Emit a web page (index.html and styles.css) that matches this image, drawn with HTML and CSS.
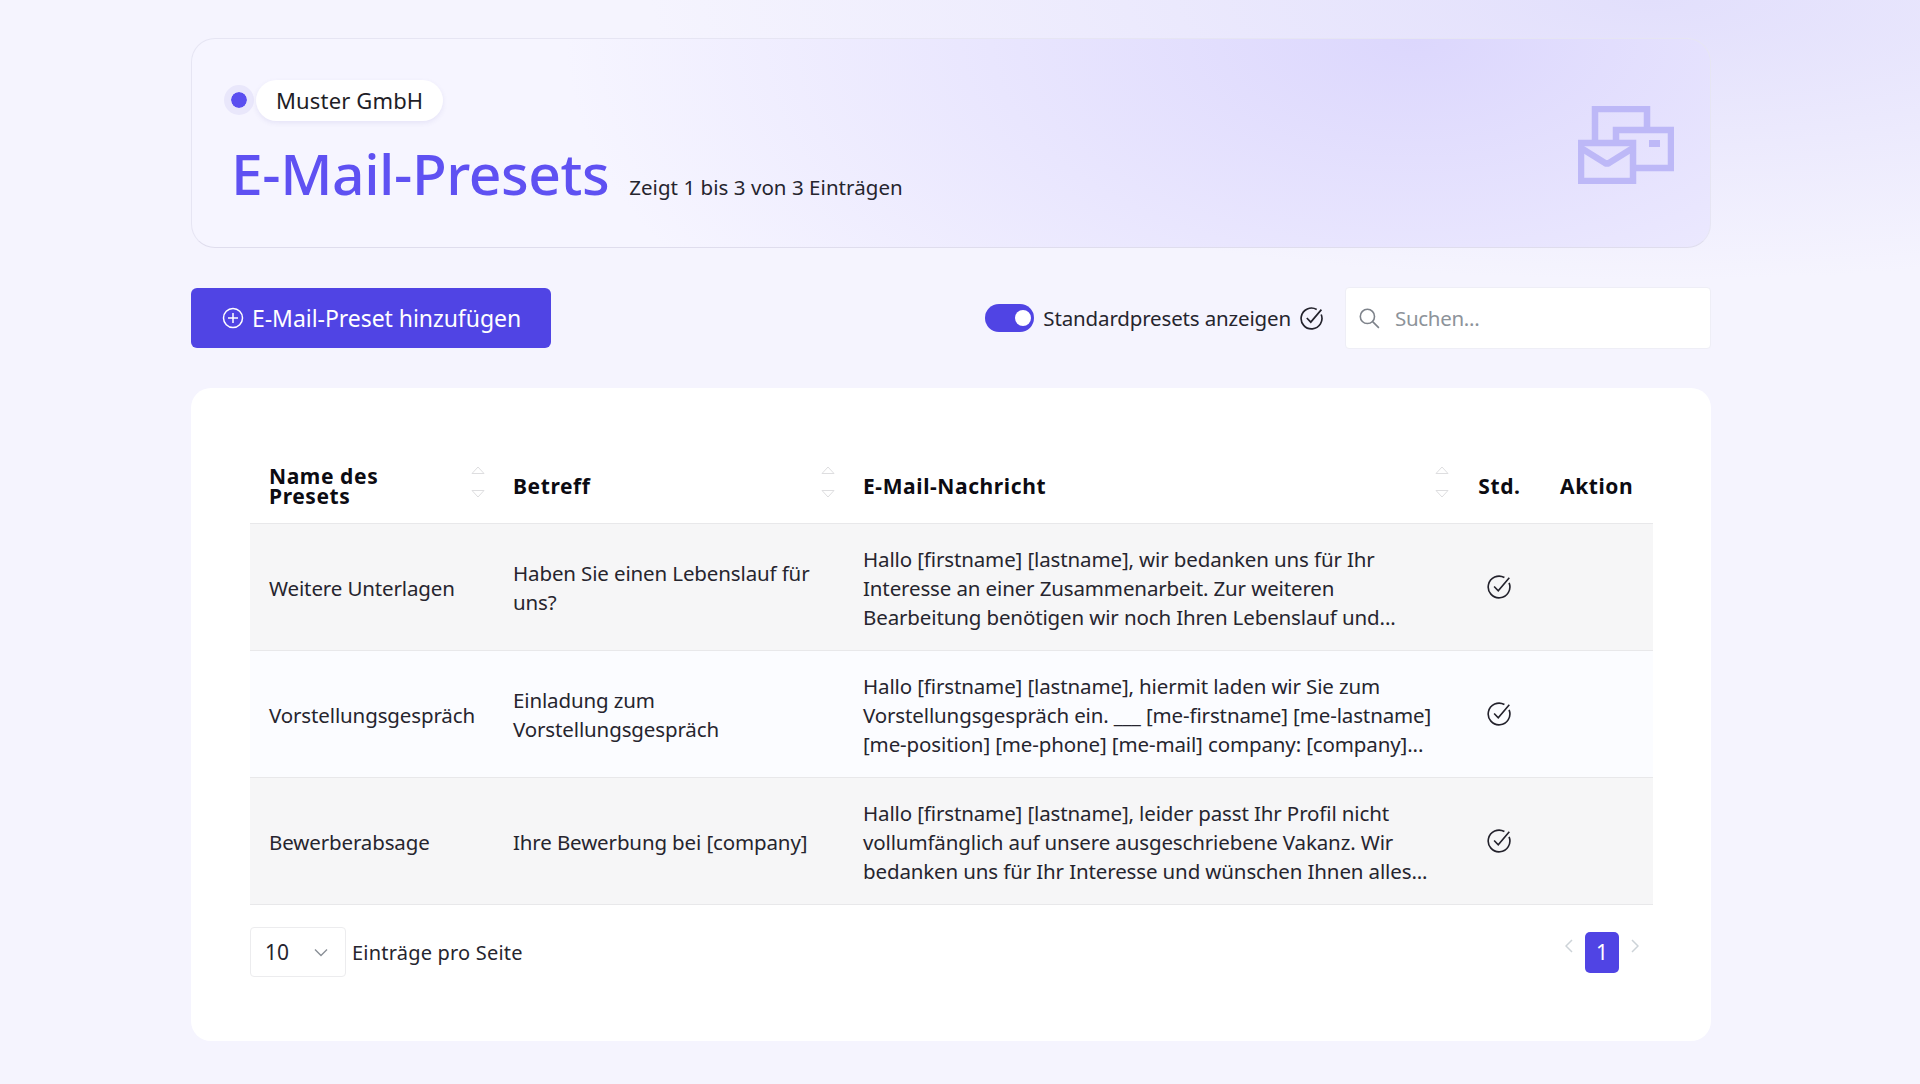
FILE: index.html
```html
<!DOCTYPE html>
<html lang="de">

<head>
    <meta charset="UTF-8" />
    <title>E-Mail-Presets</title>
    <link rel="stylesheet" href="styles.css">
</head>

<body>
    <div class="page">
        <header class="hero">
            <div class="hero-text">
                <div class="company">
                    <span class="company-dot"></span>
                    <span class="company-pill">Muster GmbH</span>
                </div>
                <div class="title-row">
                    <h1>E-Mail-Presets</h1>
                    <span class="count">Zeigt 1 bis 3 von 3 Einträgen</span>
                </div>
            </div>
            <svg class="hero-icon" width="96" height="78" viewBox="0 0 96 78" fill="none" stroke="#bdb8f7" stroke-width="6.5">
                <path d="M17 34V3H69V21" />
                <path d="M38 34V24H93V62H58" />
                <rect x="3" y="37" width="52" height="38" />
                <path d="M3 42L27 57Q29 58 31 57L55 42" />
                <rect x="71" y="34" width="11" height="7" fill="#bdb8f7" stroke="none" />
            </svg>
        </header>

        <div class="toolbar">
            <button class="add-btn">
                <svg width="22" height="22" viewBox="0 0 22 22" fill="none" stroke="#fff" stroke-width="1.5">
                    <circle cx="11" cy="11" r="9.5" />
                    <path d="M11 6V16M6 11H16" />
                </svg>
                E-Mail-Preset hinzufügen
            </button>
            <div class="toolbar-right">
                <span class="switch"><span class="switch-knob"></span></span>
                <span class="switch-label">Standardpresets anzeigen</span>
                <svg class="check" width="25" height="25" viewBox="0 0 24 24" fill="none" stroke="#23222c" stroke-width="1.6">
                    <path d="M21.3 8.2A10 10 0 1 1 17 3.3" />
                    <path d="M7.5 11.5L11.3 15.5L21.5 3.5" />
                </svg>
                <div class="search">
                    <svg width="23" height="23" viewBox="0 0 22 22" fill="none" stroke="#7d828a" stroke-width="1.5">
                        <circle cx="9" cy="9" r="6.8" />
                        <path d="M14 14L20 20" />
                    </svg>
                    <span class="search-text">Suchen...</span>
                </div>
            </div>
        </div>

        <main class="panel">
            <table class="presets">
                <colgroup>
                    <col class="col-name">
                    <col class="col-subject">
                    <col class="col-message">
                    <col class="col-std">
                    <col class="col-action">
                </colgroup>
                <thead>
                    <tr>
                        <th class="sortable tight">Name des<br>Presets
                            <svg class="sort" width="14" height="32" viewBox="0 0 14 32" fill="none" stroke="#dedee0">
                                <path d="M1 7.5L7 1L13 7.5Z" />
                                <path d="M1 24.5L7 31L13 24.5Z" />
                            </svg>
                        </th>
                        <th class="sortable">Betreff
                            <svg class="sort" width="14" height="32" viewBox="0 0 14 32" fill="none" stroke="#dedee0">
                                <path d="M1 7.5L7 1L13 7.5Z" />
                                <path d="M1 24.5L7 31L13 24.5Z" />
                            </svg>
                        </th>
                        <th class="sortable">E-Mail-Nachricht
                            <svg class="sort" width="14" height="32" viewBox="0 0 14 32" fill="none" stroke="#dedee0">
                                <path d="M1 7.5L7 1L13 7.5Z" />
                                <path d="M1 24.5L7 31L13 24.5Z" />
                            </svg>
                        </th>
                        <th class="center">Std.</th>
                        <th>Aktion</th>
                    </tr>
                </thead>
                <tbody>
                    <tr class="odd">
                        <td>Weitere Unterlagen</td>
                        <td>Haben Sie einen Lebenslauf für<br>uns?</td>
                        <td>Hallo [firstname] [lastname], wir bedanken uns für Ihr<br>Interesse an einer Zusammenarbeit. Zur weiteren<br>Bearbeitung benötigen wir noch Ihren Lebenslauf und...</td>
                        <td class="center">
                            <svg class="check" width="26" height="26" viewBox="0 0 24 24" fill="none" stroke="#23222c" stroke-width="1.5">
                                <path d="M21.3 8.2A10 10 0 1 1 17 3.3" />
                                <path d="M7.5 11.5L11.3 15.5L21.5 3.5" />
                            </svg>
                        </td>
                        <td></td>
                    </tr>
                    <tr class="even">
                        <td>Vorstellungsgespräch</td>
                        <td>Einladung zum<br>Vorstellungsgespräch</td>
                        <td>Hallo [firstname] [lastname], hiermit laden wir Sie zum<br>Vorstellungsgespräch ein. ___ [me-firstname] [me-lastname]<br>[me-position] [me-phone] [me-mail] company: [company]...</td>
                        <td class="center">
                            <svg class="check" width="26" height="26" viewBox="0 0 24 24" fill="none" stroke="#23222c" stroke-width="1.5">
                                <path d="M21.3 8.2A10 10 0 1 1 17 3.3" />
                                <path d="M7.5 11.5L11.3 15.5L21.5 3.5" />
                            </svg>
                        </td>
                        <td></td>
                    </tr>
                    <tr class="odd">
                        <td>Bewerberabsage</td>
                        <td>Ihre Bewerbung bei [company]</td>
                        <td>Hallo [firstname] [lastname], leider passt Ihr Profil nicht<br>vollumfänglich auf unsere ausgeschriebene Vakanz. Wir<br>bedanken uns für Ihr Interesse und wünschen Ihnen alles...</td>
                        <td class="center">
                            <svg class="check" width="26" height="26" viewBox="0 0 24 24" fill="none" stroke="#23222c" stroke-width="1.5">
                                <path d="M21.3 8.2A10 10 0 1 1 17 3.3" />
                                <path d="M7.5 11.5L11.3 15.5L21.5 3.5" />
                            </svg>
                        </td>
                        <td></td>
                    </tr>
                </tbody>
            </table>

            <div class="table-footer">
                <div class="per-page">
                    <div class="select">
                        <span>10</span>
                        <svg width="14" height="9" viewBox="0 0 14 9" fill="none" stroke="#8a9097" stroke-width="1.4">
                            <path d="M1 1.5L7 7.5L13 1.5" />
                        </svg>
                    </div>
                    <span class="per-page-label">Einträge pro Seite</span>
                </div>
                <div class="pager">
                    <svg width="8" height="14" viewBox="0 0 8 14" fill="none" stroke="#cdd3d8" stroke-width="1.5">
                        <path d="M7 1L1 7L7 13" />
                    </svg>
                    <span class="page-current">1</span>
                    <svg width="8" height="14" viewBox="0 0 8 14" fill="none" stroke="#cdd3d8" stroke-width="1.5">
                        <path d="M1 1L7 7L1 13" />
                    </svg>
                </div>
            </div>
        </main>
    </div>
</body>

</html>
```

FILE: styles.css
```css
html,
body {
    margin: 0;
    height: 100%;
}

body {
    font-family: "Noto Sans", "Open Sans", sans-serif;
    font-size: 20px;
    color: #26252e;
    background-color: #f5f4fe;
    background-image: radial-gradient(ellipse 1000px 280px at 1650px 0, #e2dffc, rgba(226, 223, 252, 0));
    overflow: hidden;
}

.page {
    width: 1520px;
    margin-left: 191px;
    padding-top: 38px;
}

/* Kopfbereich */
.hero {
    display: flex;
    justify-content: space-between;
    align-items: center;
    height: 210px;
    box-sizing: border-box;
    padding: 0 36px 0 32px;
    border: 1px solid #e6e5f3;
    border-bottom-color: #dfdded;
    border-radius: 24px;
    background-color: #f6f5ff;
    background-image: radial-gradient(ellipse 850px 450px at 1223px 0, #dcd7fd, rgba(220, 215, 253, 0) 100%);
}

.hero-text {
    padding-top: 2px;
}

.company {
    display: flex;
    align-items: center;
    gap: 2px;
}

.company-dot {
    width: 16px;
    height: 16px;
    border: 7px solid #e9e7fb;
    background-color: #5b4ff0;
    background-clip: padding-box;
    border-radius: 50%;
}

.company-pill {
    display: block;
    padding: 0 20px;
    line-height: 41px;
    font-size: 22px;
    letter-spacing: 0.15px;
    color: #1e1d26;
    background-color: #fff;
    border-radius: 21px;
    box-shadow: 0 2px 5px rgba(90, 80, 180, 0.1);
}

.title-row {
    display: flex;
    align-items: baseline;
    gap: 20px;
    margin-top: 16px;
}

h1 {
    margin: 0 0 0 7px;
    font-size: 57px;
    font-weight: 500;
    line-height: 72px;
    letter-spacing: -0.45px;
    color: #5f51f2;
}

.count {
    font-size: 20.5px;
    letter-spacing: 0.05px;
    color: #26252e;
}

.hero-icon {
    flex-shrink: 0;
    margin-top: 4px;
}

/* Werkzeugleiste */
.toolbar {
    display: flex;
    justify-content: space-between;
    align-items: center;
    margin-top: 39px;
    height: 62px;
}

.add-btn {
    display: flex;
    align-items: center;
    gap: 8px;
    width: 360px;
    height: 60px;
    padding: 0 0 0 31px;
    border: none;
    border-radius: 6px;
    color: #fff;
    background-color: #5044e4;
    font-family: inherit;
    font-size: 23px;
    letter-spacing: -0.05px;
}

.toolbar-right {
    display: flex;
    align-items: center;
}

.switch {
    display: block;
    width: 49px;
    height: 28px;
    border-radius: 14px;
    background-color: #5044e4;
    position: relative;
}

.switch-knob {
    position: absolute;
    top: 6px;
    right: 3px;
    width: 16px;
    height: 16px;
    border-radius: 50%;
    background-color: #fff;
}

.switch-label {
    margin-left: 9px;
    font-size: 20.5px;
    letter-spacing: -0.15px;
}

.toolbar-right .check {
    margin-left: 8px;
}

.search {
    display: flex;
    align-items: center;
    gap: 14px;
    width: 366px;
    height: 62px;
    box-sizing: border-box;
    margin-left: 21px;
    padding-left: 12px;
    background-color: #fff;
    border: 1px solid #eeeef6;
    border-radius: 4px;
}

.search-text {
    font-size: 20.5px;
    letter-spacing: -0.3px;
    color: #8d939a;
}

/* Tabelle */
.panel {
    margin-top: 39px;
    height: 653px;
    box-sizing: border-box;
    padding: 67px 58px 0 59px;
    background-color: #fff;
    border-radius: 20px;
}

.presets {
    width: 1403px;
    table-layout: fixed;
    border-collapse: collapse;
}

.col-name {
    width: 244px;
}

.col-subject {
    width: 350px;
}

.col-message {
    width: 614px;
}

.col-std {
    width: 83px;
}

th,
td {
    text-align: left;
}

th {
    height: 61px;
    padding: 0 19px 7px;
    font-size: 21px;
    font-weight: 700;
    color: #0c0b12;
    letter-spacing: 0.6px;
    border-bottom: 1px solid #e8e8ea;
}

.tight {
    line-height: 20px;
}

.sortable {
    position: relative;
}

.sort {
    position: absolute;
    top: 11px;
    right: 9px;
}

td {
    height: 124px;
    padding: 2px 19px 0;
    font-size: 20.5px;
    line-height: 29px;
    letter-spacing: -0.13px;
    white-space: nowrap;
    color: #26252e;
    border-bottom: 1px solid #e8e8ea;
}

.odd td {
    background-color: #f6f6f7;
}

.even td {
    background-color: #fbfcff;
}

th.center {
    padding: 0 0 7px;
    text-align: center;
}

td.center {
    padding: 2px 2px 0 0;
}

td .check {
    display: block;
    margin: -3px auto 0;
}

/* Fuss der Tabelle */
.table-footer {
    display: flex;
    justify-content: space-between;
    align-items: center;
    margin-top: 22px;
}

.per-page {
    display: flex;
    align-items: center;
    gap: 6px;
}

.select {
    display: flex;
    align-items: center;
    justify-content: space-between;
    width: 96px;
    height: 50px;
    box-sizing: border-box;
    padding: 0 17px 0 14px;
    border: 1px solid #ececee;
    border-radius: 4px;
    font-size: 21px;
}

.per-page-label {
    font-size: 20px;
    letter-spacing: 0.2px;
}

.pager {
    display: flex;
    align-items: center;
    gap: 12px;
    padding-right: 14px;
}

.pager svg {
    margin-top: -12px;
}

.page-current {
    display: block;
    width: 34px;
    height: 41px;
    line-height: 41px;
    text-align: center;
    color: #fff;
    background-color: #5044e4;
    border-radius: 5px;
    font-size: 21px;
}
```
